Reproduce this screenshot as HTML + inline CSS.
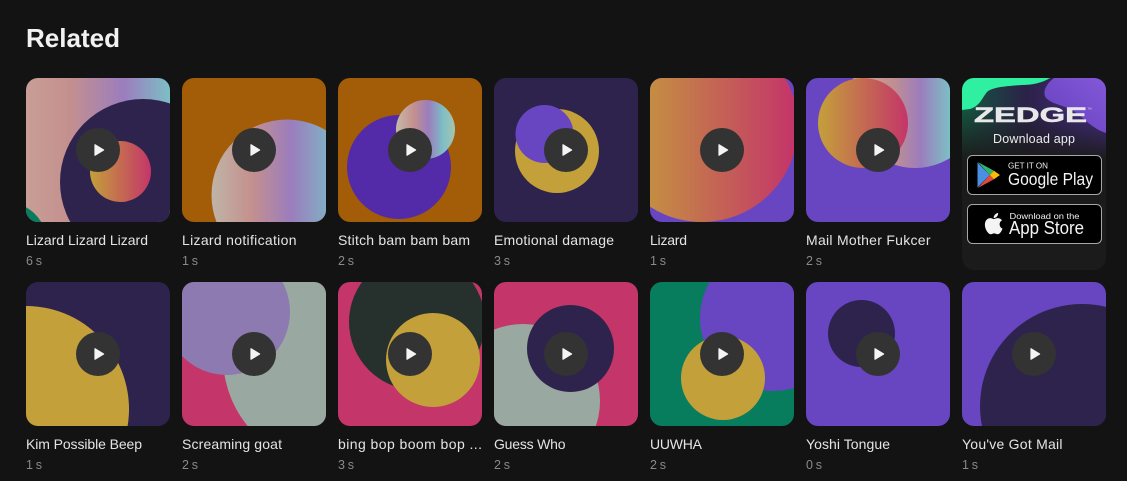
<!DOCTYPE html>
<html>
<head>
<meta charset="utf-8">
<title>Related</title>
<style>
html,body{margin:0;padding:0;background:#131313;width:1127px;height:481px;overflow:hidden}
svg{display:block}
text{font-family:"Liberation Sans",sans-serif}
.n{font-size:14px;fill:#e4e4e4}
.d{font-size:12.5px;fill:#8a8a8a}
.p{fill:#333333}
.t{fill:#f4f4f4;stroke:#f4f4f4;stroke-width:1.2;stroke-linejoin:round}
</style>
</head>
<body>
<svg width="1127" height="481" viewBox="0 0 1127 481" xmlns="http://www.w3.org/2000/svg">
<defs>
<clipPath id="c"><rect width="144" height="144" rx="12"/></clipPath>
<clipPath id="ac"><rect width="144" height="192" rx="12"/></clipPath>
<linearGradient id="g1" gradientUnits="userSpaceOnUse" x1="0" x2="144" y1="0" y2="0">
<stop offset="0" stop-color="#c99e96"/><stop offset=".3" stop-color="#c4908e"/><stop offset=".68" stop-color="#9b7dbd"/><stop offset="1" stop-color="#7dbfc5"/></linearGradient>
<linearGradient id="gp"><stop offset="0" stop-color="#c4a03a"/><stop offset="1" stop-color="#c43569"/></linearGradient>
<linearGradient id="g2" gradientUnits="userSpaceOnUse" x1="30" x2="150" y1="0" y2="0">
<stop offset="0" stop-color="#c0b4a6"/><stop offset=".33" stop-color="#c4908e"/><stop offset=".66" stop-color="#9b7dbd"/><stop offset="1" stop-color="#7fb5c5"/></linearGradient>
<linearGradient id="g3"><stop offset="0" stop-color="#c6baa8"/><stop offset=".3" stop-color="#c4908e"/><stop offset=".55" stop-color="#9b7dbd"/><stop offset=".8" stop-color="#7dbfc5"/><stop offset="1" stop-color="#a8c4ae"/></linearGradient>
<linearGradient id="g5" gradientUnits="userSpaceOnUse" x1="-30" x2="144" y1="0" y2="0"><stop offset="0" stop-color="#c4a03a"/><stop offset="1" stop-color="#c43569"/></linearGradient>
<linearGradient id="g6" gradientUnits="userSpaceOnUse" x1="60" x2="144" y1="0" y2="0"><stop offset="0" stop-color="#c8a098"/><stop offset=".3" stop-color="#c4908e"/><stop offset=".65" stop-color="#9b7dbd"/><stop offset="1" stop-color="#7dbfc5"/></linearGradient>
<linearGradient id="ah" x1="0" x2="1" y1="0" y2="0"><stop offset="0" stop-color="#14583f"/><stop offset=".45" stop-color="#2c2148"/><stop offset="1" stop-color="#4a2f8e"/></linearGradient>
<linearGradient id="af" x1="0" x2="0" y1="0" y2="1"><stop offset="0" stop-color="#1b1b1b" stop-opacity="0"/><stop offset="1" stop-color="#1b1b1b"/></linearGradient>
<linearGradient id="ap" x1="0" x2="1" y1="1" y2="0"><stop offset="0" stop-color="#6540bd"/><stop offset="1" stop-color="#8358d8"/></linearGradient>
<g id="pl"><circle class="p" cx="72" cy="72" r="22"/><path class="t" d="M69 66.8V77.2L77.6 72Z"/></g>
</defs>

<rect width="1127" height="481" fill="#131313"/>
<text x="26" y="47" font-size="26" font-weight="700" fill="#f1f1f1" textLength="94" lengthAdjust="spacingAndGlyphs">Related</text>

<!-- Row 1 -->
<g transform="translate(26 78)"><g clip-path="url(#c)"><rect width="144" height="144" fill="url(#g1)"/><circle cx="-20" cy="165" r="41" fill="#087d5e"/><circle cx="117" cy="104" r="83" fill="#2e234c"/><circle cx="94.5" cy="93.5" r="30.5" fill="url(#gp)"/></g><use href="#pl"/></g>
<g transform="translate(182 78)"><g clip-path="url(#c)"><rect width="144" height="144" fill="#a35c07"/><circle cx="105" cy="117" r="75.5" fill="url(#g2)"/></g><use href="#pl"/></g>
<g transform="translate(338 78)"><g clip-path="url(#c)"><rect width="144" height="144" fill="#a35c07"/><circle cx="61" cy="89" r="52" fill="#532ba8"/><circle cx="87.5" cy="51.5" r="29.5" fill="url(#g3)"/></g><use href="#pl"/></g>
<g transform="translate(494 78)"><g clip-path="url(#c)"><rect width="144" height="144" fill="#2e234c"/><circle cx="63" cy="73" r="42" fill="#c4a03a"/><circle cx="50.5" cy="56" r="29" fill="#6845c1"/></g><use href="#pl"/></g>
<g transform="translate(650 78)"><g clip-path="url(#c)"><rect width="144" height="144" fill="#6845c1"/><circle cx="52" cy="48" r="96" fill="url(#g5)"/></g><use href="#pl"/></g>
<g transform="translate(806 78)"><g clip-path="url(#c)"><rect width="144" height="144" fill="#6845c1"/><circle cx="109" cy="24" r="66" fill="url(#g6)"/><circle cx="57" cy="45" r="45" fill="url(#gp)"/></g><use href="#pl"/></g>

<!-- Row 2 -->
<g transform="translate(26 282)"><g clip-path="url(#c)"><rect width="144" height="144" fill="#2e234c"/><path d="M0 24A103 103 0 0 1 101.6 144H0Z" fill="#c4a03a"/></g><use href="#pl"/></g>
<g transform="translate(182 282)"><g clip-path="url(#c)"><rect width="144" height="144" fill="#c43569"/><circle cx="150" cy="75" r="109" fill="#9aa8a2"/><circle cx="45" cy="30" r="63" fill="#8c7ab0"/></g><use href="#pl"/></g>
<g transform="translate(338 282)"><g clip-path="url(#c)"><rect width="144" height="144" fill="#c43569"/><circle cx="79" cy="40" r="68" fill="#26302d"/><circle cx="95" cy="78" r="47" fill="#c4a03a"/></g><use href="#pl"/></g>
<g transform="translate(494 282)"><g clip-path="url(#c)"><rect width="144" height="144" fill="#c43569"/><circle cx="29" cy="119" r="77" fill="#9aa8a2"/><circle cx="76.5" cy="66.5" r="43.5" fill="#2e234c"/></g><use href="#pl"/></g>
<g transform="translate(650 282)"><g clip-path="url(#c)"><rect width="144" height="144" fill="#087d5e"/><circle cx="123" cy="36" r="73" fill="#6845c1"/><circle cx="73" cy="96" r="42" fill="#c4a03a"/></g><use href="#pl"/></g>
<g transform="translate(806 282)"><g clip-path="url(#c)"><rect width="144" height="144" fill="#6845c1"/><circle cx="55.5" cy="51.5" r="33.5" fill="#2e234c"/></g><use href="#pl"/></g>
<g transform="translate(962 282)"><g clip-path="url(#c)"><rect width="144" height="144" fill="#6845c1"/><path d="M20 144A102 102 0 0 1 144 24.9V144Z" fill="#2e234c"/></g><use href="#pl"/></g>

<!-- Labels -->
<text class="n" x="26" y="245" textLength="122">Lizard Lizard Lizard</text><text class="d" x="26" y="265" textLength="16">6 s</text>
<text class="n" x="182" y="245" textLength="114.5">Lizard notification</text><text class="d" x="182" y="265" textLength="16">1 s</text>
<text class="n" x="338" y="245" textLength="132">Stitch bam bam bam</text><text class="d" x="338" y="265" textLength="16">2 s</text>
<text class="n" x="494" y="245" textLength="120">Emotional damage</text><text class="d" x="494" y="265" textLength="16">3 s</text>
<text class="n" x="650" y="245" textLength="37">Lizard</text><text class="d" x="650" y="265" textLength="16">1 s</text>
<text class="n" x="806" y="245" textLength="124.5">Mail Mother Fukcer</text><text class="d" x="806" y="265" textLength="16">2 s</text>

<text class="n" x="26" y="449" textLength="116">Kim Possible Beep</text><text class="d" x="26" y="469" textLength="16">1 s</text>
<text class="n" x="182" y="449" textLength="100">Screaming goat</text><text class="d" x="182" y="469" textLength="16">2 s</text>
<text class="n" x="338" y="449" textLength="144">bing bop boom bop ...</text><text class="d" x="338" y="469" textLength="16">3 s</text>
<text class="n" x="494" y="449" textLength="71.5">Guess Who</text><text class="d" x="494" y="469" textLength="16">2 s</text>
<text class="n" x="650" y="449" textLength="52">UUWHA</text><text class="d" x="650" y="469" textLength="16">2 s</text>
<text class="n" x="806" y="449" textLength="84">Yoshi Tongue</text><text class="d" x="806" y="469" textLength="16">0 s</text>
<text class="n" x="962" y="449" textLength="100.5">You've Got Mail</text><text class="d" x="962" y="469" textLength="16">1 s</text>

<!-- Ad card -->
<g transform="translate(962 78)">
<g clip-path="url(#ac)">
<rect width="144" height="192" fill="#1b1b1b"/>
<rect width="144" height="82" fill="url(#ah)"/>
<rect y="30" width="144" height="52" fill="url(#af)"/>
<path d="M92 0C84 6 80 14 84 20C90 26 100 27 108 31C120 37 128 50 144 55V0Z" fill="url(#ap)"/>
<path d="M0 0H88C80 5 70 7 60 7C45 8 30 9 25 14C20 20 18 28 8 31L0 32Z" fill="#2ef0a0"/>
</g>
<text x="12" y="44" font-size="21" font-weight="700" fill="#e8e8e8" stroke="#e8e8e8" stroke-width=".5" textLength="113" lengthAdjust="spacingAndGlyphs">ZEDGE</text>
<text x="125" y="33" font-size="5" fill="#cfcfcf">™</text>
<text x="72" y="65" font-size="12.5" fill="#ececec" text-anchor="middle" textLength="82">Download app</text>
</g>

<!-- Google Play -->
<rect x="967.5" y="155.5" width="134" height="39" rx="5" fill="#000" stroke="#a6a6a6"/>
<path d="M977.5 162.5V187.5L989.8 175Z" fill="#4a90e2"/>
<path d="M977.8 162L994 170.8L989.8 175Z" fill="#34b36a"/>
<path d="M977.8 188L994 179.2L989.8 175Z" fill="#e5483d"/>
<path d="M994 170.8L1000 175L994 179.2L989.8 175Z" fill="#fbbc04"/>
<text x="1008" y="168.5" font-size="8.5" fill="#f0f0f0" textLength="40" lengthAdjust="spacingAndGlyphs">GET IT ON</text>
<text x="1008" y="185" font-size="17.5" fill="#f4f4f4" textLength="85" lengthAdjust="spacingAndGlyphs">Google Play</text>

<!-- App Store -->
<rect x="967.5" y="204.5" width="134" height="39" rx="5" fill="#000" stroke="#a6a6a6"/>
<path transform="translate(979.8 209.5) scale(1.16 1.18)" fill="#f4f4f4" d="M17.05 20.28c-.98.95-2.05.8-3.08.35-1.09-.46-2.09-.48-3.24 0-1.44.62-2.2.44-3.06-.35C2.79 15.25 3.51 7.59 9.05 7.31c1.35.07 2.29.74 3.08.8 1.18-.24 2.31-.93 3.57-.84 1.51.12 2.65.72 3.4 1.8-3.12 1.87-2.38 5.98.48 7.13-.57 1.5-1.31 2.99-2.54 4.09zM12.03 7.25c-.15-2.23 1.66-4.07 3.74-4.25.29 2.58-2.34 4.5-3.74 4.25z"/>
<text x="1009.5" y="219" font-size="8.5" fill="#f0f0f0" textLength="70" lengthAdjust="spacingAndGlyphs">Download on the</text>
<text x="1009" y="234" font-size="18" fill="#f4f4f4" textLength="75" lengthAdjust="spacingAndGlyphs">App Store</text>
</svg>
</body>
</html>
